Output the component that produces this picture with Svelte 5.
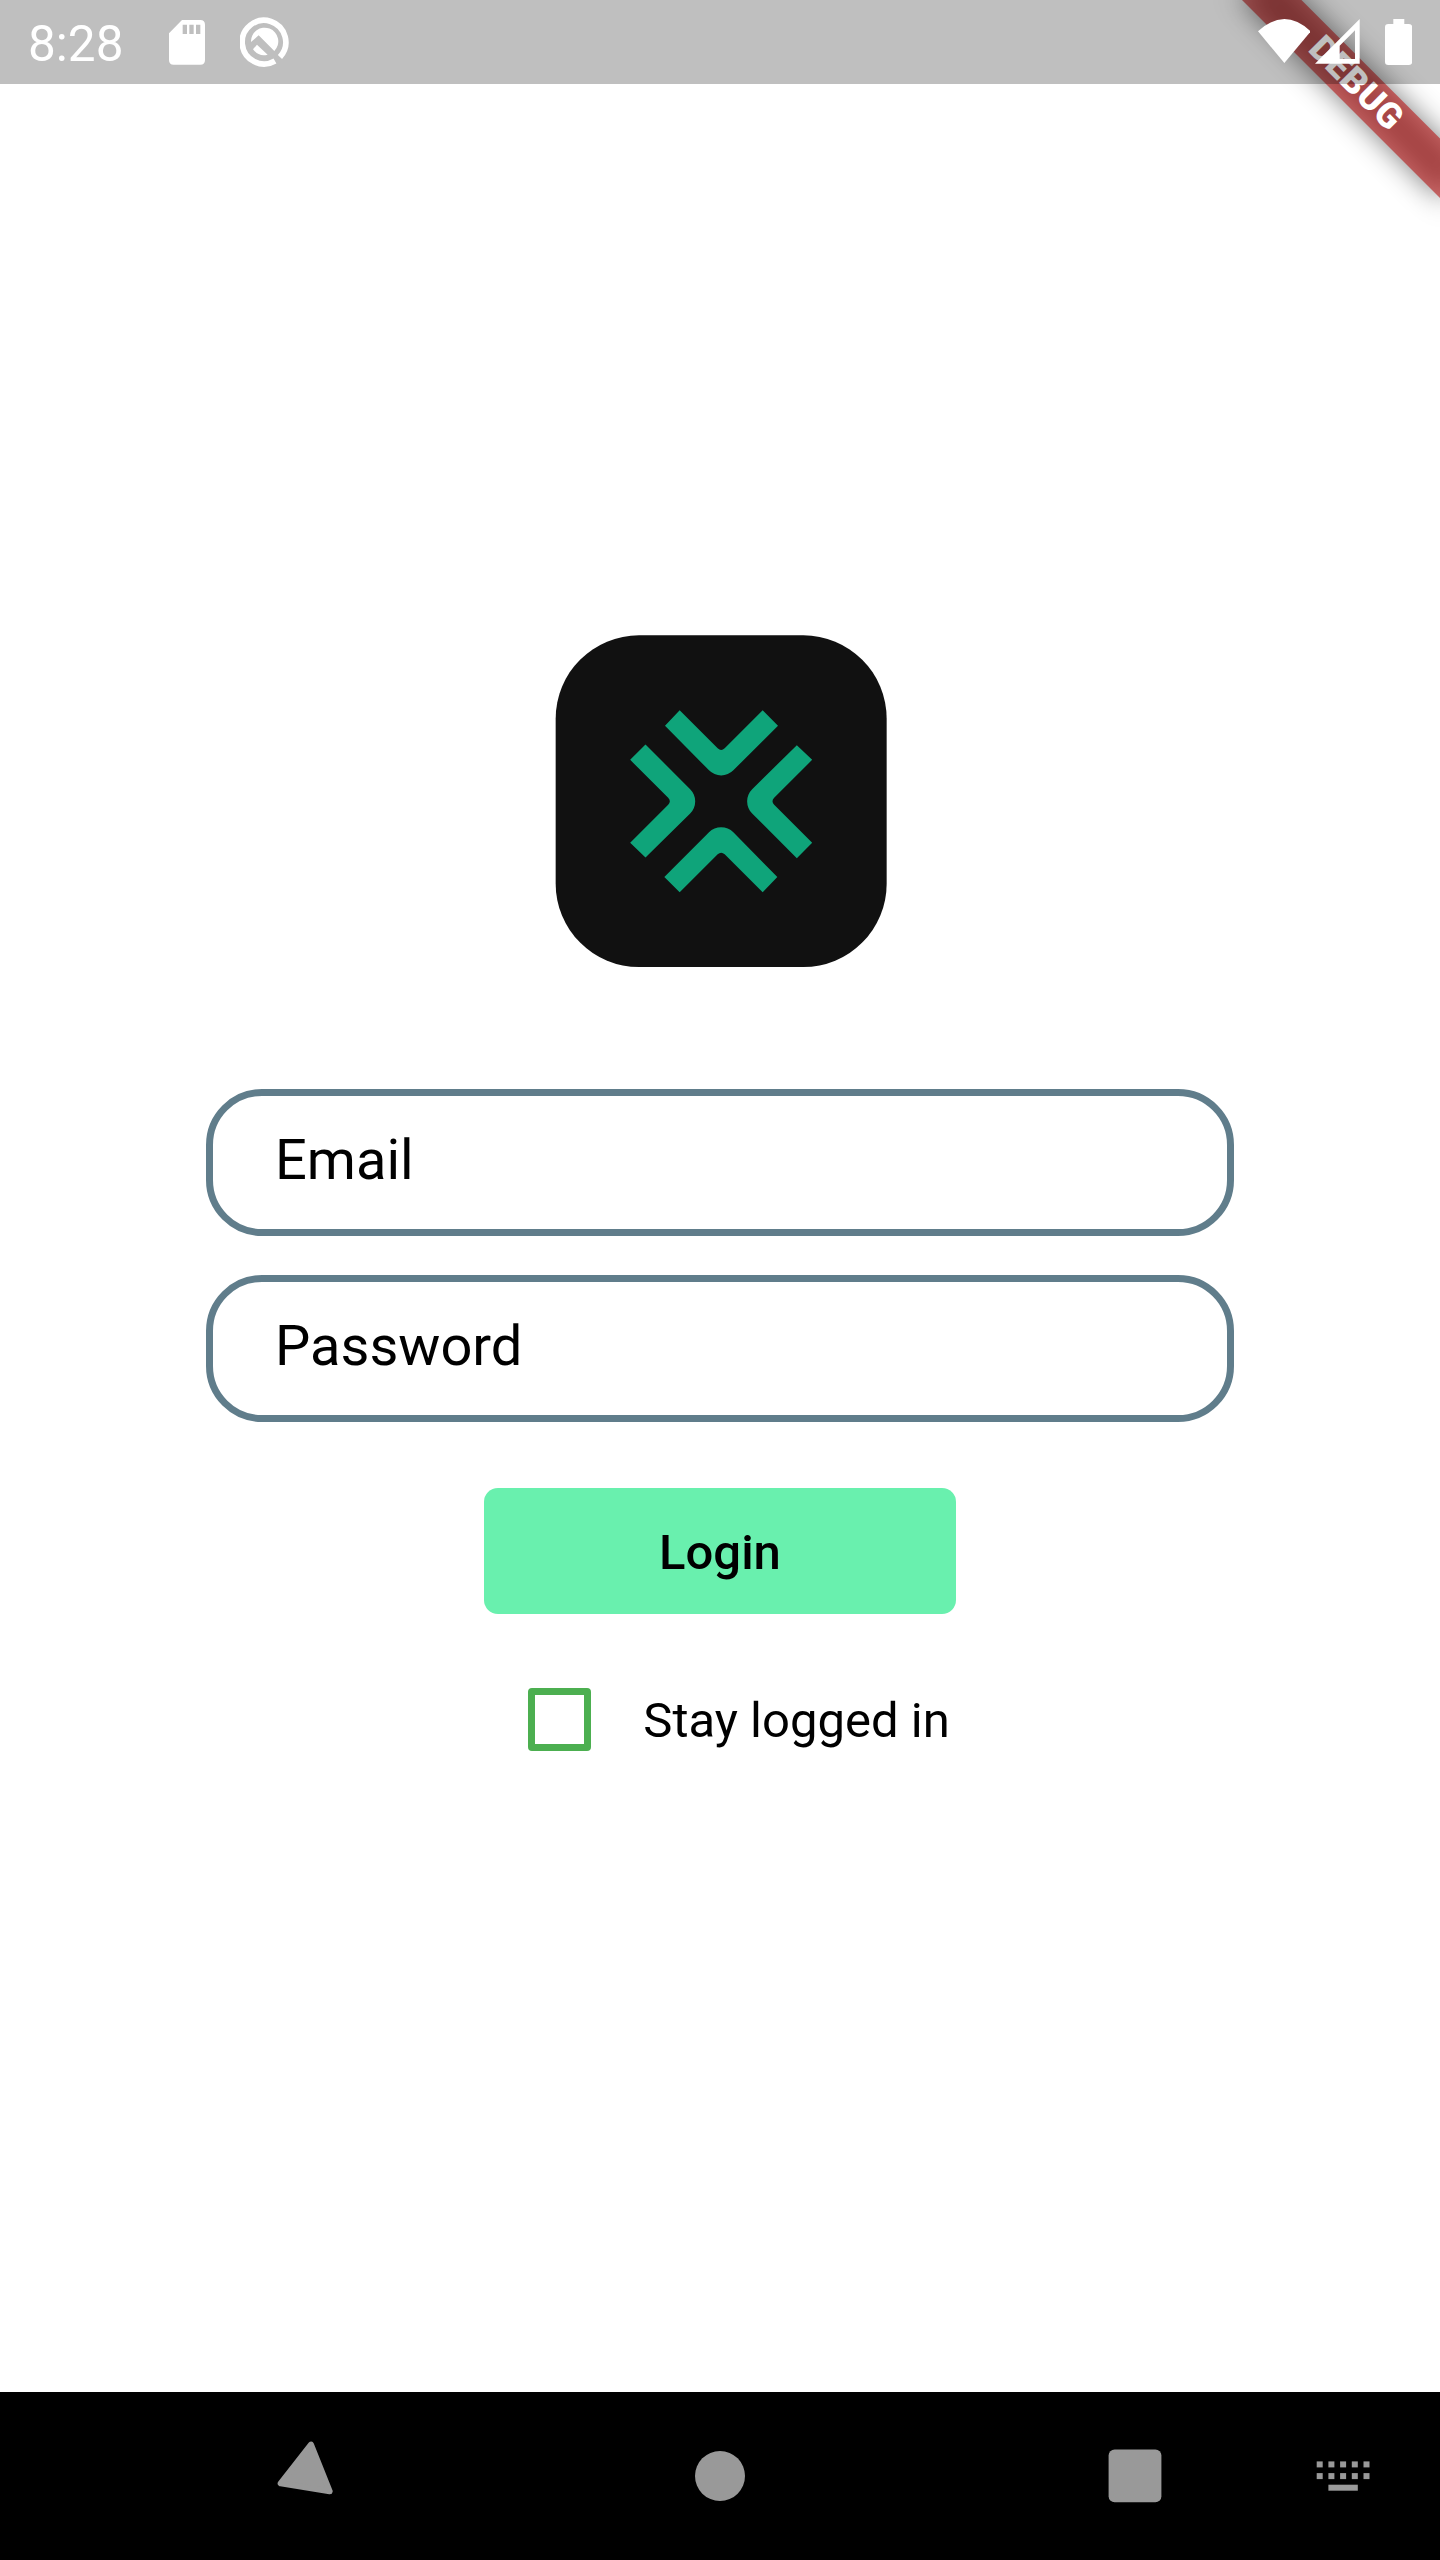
<script>
  const keyColumns = [0, 1, 2, 3, 4];
  const fields = ['Email', 'Password'];
</script>

<div class="screen">
  <header class="status">
    <span class="time">8:28</span>
    <svg class="sd" viewBox="0 0 108 134" aria-hidden="true">
      <path fill="#fff" fill-rule="evenodd" d="M39 0H94Q108 0 108 14V120Q108 134 94 134H14Q0 134 0 120V40ZM41 14V42H54V14ZM61 14V42H74V14ZM81 14V42H94V14Z" />
    </svg>
    <svg class="ring" viewBox="0 0 148 150" aria-hidden="true">
      <path fill="none" stroke="#fff" stroke-width="17" d="M120 120A65.5 65.5 0 1 0 105 132" />
      <path fill="#fff" d="M33 75A41 41 0 1 1 103 102L56 55Z" />
      <path fill="#fff" d="M39 97L51 83L83 113Q58 121 39 97Z" />
    </svg>
    <div class="right">
      <svg class="wifi" viewBox="0 0 158 132" aria-hidden="true">
        <path fill="#fff" d="M0 37Q79 -37 158 37L79 132Z" />
      </svg>
      <svg class="signal" viewBox="0 0 134 134" aria-hidden="true">
        <path fill="#fff" fill-rule="evenodd" d="M134 0V134H0ZM120 34L74 80V120H120Z" />
      </svg>
      <svg class="battery" viewBox="0 0 82 138" aria-hidden="true">
        <path fill="#fff" d="M25 0H58V15H72Q82 15 82 25V128Q82 138 72 138H10Q0 138 0 128V25Q0 15 10 15H25Z" />
      </svg>
    </div>
  </header>

  <svg class="banner" viewBox="-300 0 300 300" aria-hidden="true">
    <defs>
      <filter id="soft" filterUnits="userSpaceOnUse" x="-240" y="0" width="480" height="240">
        <feGaussianBlur stdDeviation="13.9" />
      </filter>
    </defs>
    <g transform="rotate(45)">
      <rect x="-140" y="98" width="280" height="42" fill="#000" fill-opacity=".5" filter="url(#soft)" />
      <rect x="-140" y="98" width="280" height="42" fill="#b71c1c" fill-opacity=".627" />
      <text x="-0.5" y="129.8" text-anchor="middle">DEBUG</text>
    </g>
  </svg>

  <main>
    <svg class="logo" viewBox="-2 -1 996 996" aria-hidden="true">
      <defs>
        <path id="chevron" d="M328 271L372 225L486 339Q496.500 349 507 339L621 225L667 271L533 405A51.600 51.600 0 0 1 460 405Z" />
      </defs>
      <rect width="993" height="995" rx="250" fill="#111" />
      <g fill="#0fa47a">
        <use href="#chevron" />
        <use href="#chevron" transform="rotate(90 496.5 498)" />
        <use href="#chevron" transform="rotate(180 496.5 498)" />
        <use href="#chevron" transform="rotate(270 496.5 498)" />
      </g>
    </svg>
    <form>
      {#each fields as field}
        <div class="field">{field}</div>
      {/each}
      <button type="button" class="login">Login</button>
      <div class="stay"><span class="box"></span><span class="label">Stay logged in</span></div>
    </form>
  </main>

  <nav>
    <svg class="back" viewBox="0 0 70 70" aria-hidden="true">
      <path fill="#999" stroke="#999" stroke-width="6" stroke-linejoin="round" d="M41 3.500L10.700 42.300L59.700 50.300Z" />
    </svg>
    <svg class="home" viewBox="0 0 70 70" aria-hidden="true"><circle cx="35" cy="35" r="25" fill="#999" /></svg>
    <svg class="recent" viewBox="0 0 70 70" aria-hidden="true"><rect x="8.600" y="8.500" width="52.800" height="52.800" rx="6" fill="#999" /></svg>
    <svg class="keys" viewBox="0 0 70 70" aria-hidden="true">
      <g fill="#999">
        {#each keyColumns as c}
          <rect x={9.7 + c * 11.7} y="20.400" width="6" height="6" />
          <rect x={9.7 + c * 11.7} y="32.100" width="6" height="6" />
        {/each}
        <rect x="21.400" y="43.700" width="29.400" height="6" />
      </g>
    </svg>
  </nav>
</div>

<style>
  :global(body) { margin: 0; background: #fff; }
  .screen {
    position: relative;
    display: flex;
    flex-direction: column;
    width: 1440px;
    height: 2560px;
    overflow: hidden;
    background: #fff;
    color: #000;
    font-family: Roboto, sans-serif;
  }
  svg { display: block; flex: none; }
  .status {
    position: relative;
    z-index: 2;
    display: flex;
    box-sizing: border-box;
    height: 84px;
    padding-left: 28px;
    background: rgba(0, 0, 0, 0.25);
    color: #fff;
  }
  .time { width: 141px; font-size: 49.500px; line-height: 57px; padding-top: 16px; }
  .sd { width: 36px; height: 44.700px; margin-top: 20px; }
  .ring { width: 49.300px; height: 50px; margin: 17px 0 0 35px; }
  .right { display: flex; margin-left: auto; padding-right: 28px; }
  .wifi { width: 52.700px; height: 44px; margin-top: 19px; }
  .signal { width: 44.700px; height: 44.700px; margin: 19.300px 0 0 4.700px; }
  .battery { width: 27.300px; height: 46px; margin: 19px 0 0 25px; }
  .banner {
    position: absolute;
    z-index: 1;
    top: 0;
    right: 0;
    width: 300px;
    height: 300px;
  }
  .banner text { fill: #fff; font-family: Roboto, sans-serif; font-size: 35.700px; font-weight: 900; letter-spacing: 0.35px; }
  main { display: flex; flex: 1; flex-direction: column; align-items: center; padding-top: 551px; }
  .logo { width: 332px; height: 332px; margin-left: 2px; }
  form { display: flex; flex-direction: column; align-items: center; margin-top: 122px; }
  .field {
    box-sizing: border-box;
    width: 1028px;
    height: 147px;
    margin-bottom: 38.500px;
    padding: 31px 62px 0;
    border: 7px solid #607d8b;
    border-radius: 56px;
    font-size: 56px;
    line-height: 66px;
  }
  .login {
    width: 472px;
    height: 126px;
    margin-top: 28px;
    padding: 3px 0 0;
    border: 0;
    border-radius: 14px;
    background: #69f0ae;
    color: #000;
    font: 500 49px/123px Roboto, sans-serif;
  }
  .stay { display: flex; align-items: center; gap: 52px; height: 63px; margin-top: 74px; padding-left: 38px; font-size: 49px; line-height: 58px; }
  .label { padding-top: 3px; }
  .box { box-sizing: border-box; width: 63px; height: 63px; border: 7px solid #4caf50; border-radius: 4px; }
  nav { display: flex; align-items: center; box-sizing: border-box; height: 168px; padding-left: 270px; background: #000; }
  nav svg { width: 70px; height: 70px; }
  .home, .recent { margin-left: 345px; }
  .keys { margin-left: 137px; }
</style>
